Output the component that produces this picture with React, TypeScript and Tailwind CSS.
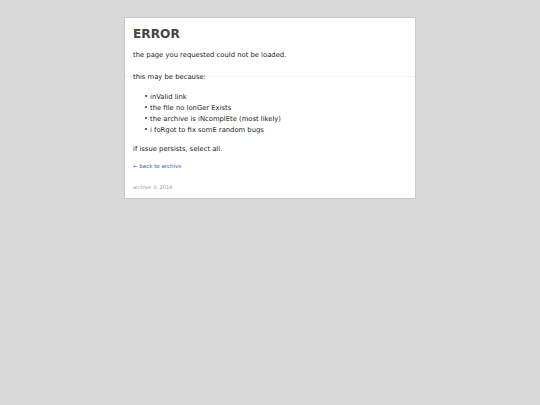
const items = [
  'inValid link',
  'the fIle no lonGer Exists',
  'the archive is iNcomplEte (most likely)',
  'i foRgot to fix somE random bugs',
];

export default function App() {
  return (
    <div className="min-h-[405px] w-full bg-[#d9d9d9] pt-[17px]" style={{ fontFamily: '"DejaVu Sans", Verdana, sans-serif' }}>
      <div className="ml-[124px] w-[292px] border border-[#c9c9c9] bg-white">
        <div className="px-[8px] pt-[8px]">
          <h1 className="text-[12.2px] font-bold leading-[16px] text-[#444]">ERROR</h1>
          <p className="mt-[8px] text-[6.8px] leading-[11px] text-[#222]">the page you requested could not be loaded.</p>
        </div>
        <div className="mt-[15px] border-t border-[#f2f2f2]">
          <p className="-mt-[5px] px-[8px] text-[6.8px] leading-[11px] text-[#222]">this may be because:</p>
          <ul className="mt-[9px] pl-[20px] text-[6.8px] leading-[11px] text-[#222]">
            {items.map((t) => (
              <li key={t} className="flex items-center">
                <span className="mb-[3px] mr-[3px] h-[2px] w-[2px] rounded-full bg-[#333]" />
                <span>{t}</span>
              </li>
            ))}
          </ul>
          <p className="mt-[8px] px-[8px] text-[6.8px] leading-[11px] text-[#222]">if issue persists, select all.</p>
          <p className="mt-[6px] px-[8px] text-[5.5px] leading-[11px] text-[#3a5fa8]">← back to archive</p>
          <p className="mt-[10px] px-[8px] pb-[5px] text-[5px] leading-[11px] text-[#999]">archive © 2014</p>
        </div>
      </div>
    </div>
  );
}
